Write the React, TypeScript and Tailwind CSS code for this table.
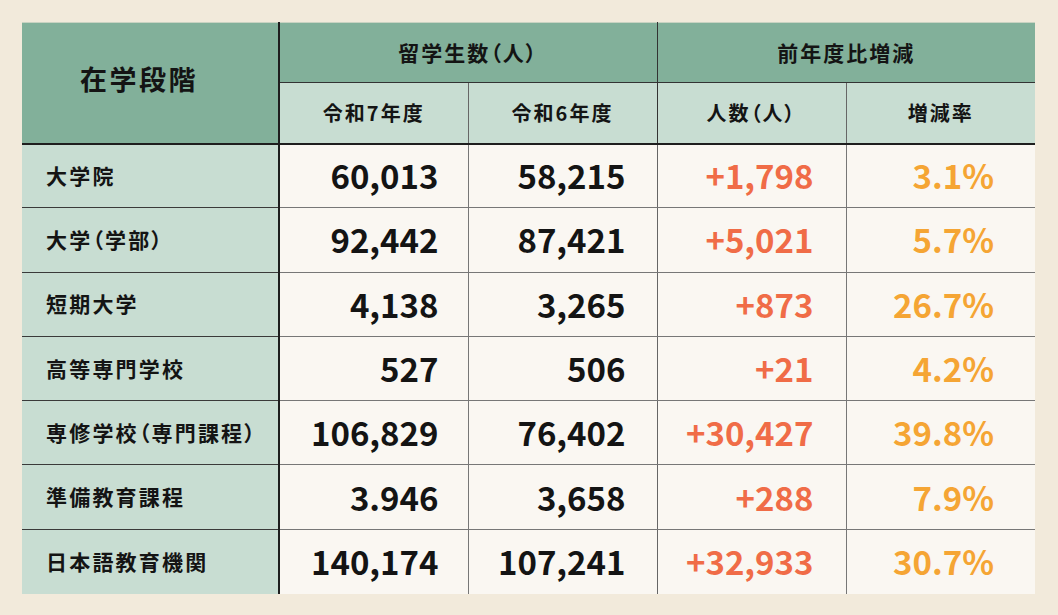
type Row = {
  label: string
  r7: string
  r6: string
  diff: string
  rate: string
}

const ROWS: Row[] = [
  { label: "大学院", r7: "60,013", r6: "58,215", diff: "+1,798", rate: "3.1%" },
  { label: "大学（学部）", r7: "92,442", r6: "87,421", diff: "+5,021", rate: "5.7%" },
  { label: "短期大学", r7: "4,138", r6: "3,265", diff: "+873", rate: "26.7%" },
  { label: "高等専門学校", r7: "527", r6: "506", diff: "+21", rate: "4.2%" },
  { label: "専修学校（専門課程）", r7: "106,829", r6: "76,402", diff: "+30,427", rate: "39.8%" },
  { label: "準備教育課程", r7: "3.946", r6: "3,658", diff: "+288", rate: "7.9%" },
  { label: "日本語教育機関", r7: "140,174", r6: "107,241", diff: "+32,933", rate: "30.7%" },
]

export default function App() {
  return (
    <div
      className="min-h-screen w-full bg-[#f2eadb] pl-[22px] pt-[22px] [font-feature-settings:'palt']"
      style={{ fontFamily: '"Noto Sans CJK JP", "Noto Sans", sans-serif' }}
    >
      <table className="w-[1013px] table-fixed border-t border-t-[#c9d3c2] text-[#141414]">
        <colgroup>
          <col className="w-[257px]" />
          <col className="w-[189px]" />
          <col className="w-[189px]" />
          <col className="w-[189px]" />
          <col className="w-[189px]" />
        </colgroup>
        <thead>
          <tr className="h-[60px] bg-[#82b09a]">
            <th
              rowSpan={2}
              className="border-r-2 border-b-2 border-[#1e1e1e] pr-[22px] pb-[8px] text-center text-[27px] font-bold tracking-[2.5px]"
            >
              在学段階
            </th>
            <th colSpan={2} className="border-r border-b border-[#333] text-center text-[21px] font-bold tracking-[2px]">
              留学生数（人）
            </th>
            <th colSpan={2} className="border-b border-[#333] text-center text-[21px] font-bold tracking-[2px]">
              前年度比増減
            </th>
          </tr>
          <tr className="h-[61px] bg-[#c8ddd2]">
            <th className="border-r border-b-2 border-r-[#666] border-b-[#1e1e1e] text-center text-[20px] font-bold tracking-[2px]">
              令和7年度
            </th>
            <th className="border-r border-b-2 border-r-[#333] border-b-[#1e1e1e] text-center text-[20px] font-bold tracking-[2px]">
              令和6年度
            </th>
            <th className="border-r border-b-2 border-r-[#666] border-b-[#1e1e1e] text-center text-[20px] font-bold tracking-[2px]">
              人数（人）
            </th>
            <th className="border-b-2 border-b-[#1e1e1e] text-center text-[20px] font-bold tracking-[2px]">
              増減率
            </th>
          </tr>
        </thead>
        <tbody>
          {ROWS.map((row, i) => {
            const last = i === ROWS.length - 1
            return (
              <tr key={row.label} className="h-[64.3px]">
                <td
                  className={`border-r-2 border-r-[#1e1e1e] bg-[#c8ddd2] pl-[24px] text-[21px] font-bold tracking-[2.2px] ${
                    last ? "" : "border-b border-b-[#3a3a3a]"
                  }`}
                >
                  {row.label}
                </td>
                <td
                  className={`border-r border-r-[#777] bg-[#faf7f2] pr-[29px] text-right text-[33px] font-bold leading-none ${
                    last ? "" : "border-b border-b-[#777]"
                  }`}
                >
                  {row.r7}
                </td>
                <td
                  className={`border-r border-r-[#666] bg-[#faf7f2] pr-[31px] text-right text-[33px] font-bold leading-none ${
                    last ? "" : "border-b border-b-[#777]"
                  }`}
                >
                  {row.r6}
                </td>
                <td
                  className={`border-r border-r-[#777] bg-[#faf7f2] pr-[32px] text-right text-[33px] font-bold leading-none text-[#f06c47] ${
                    last ? "" : "border-b border-b-[#777]"
                  }`}
                >
                  {row.diff}
                </td>
                <td
                  className={`bg-[#faf7f2] pr-[41px] text-right text-[33px] font-bold leading-none text-[#f5a534] ${
                    last ? "" : "border-b border-b-[#777]"
                  }`}
                >
                  {row.rate}
                </td>
              </tr>
            )
          })}
        </tbody>
      </table>
    </div>
  )
}
